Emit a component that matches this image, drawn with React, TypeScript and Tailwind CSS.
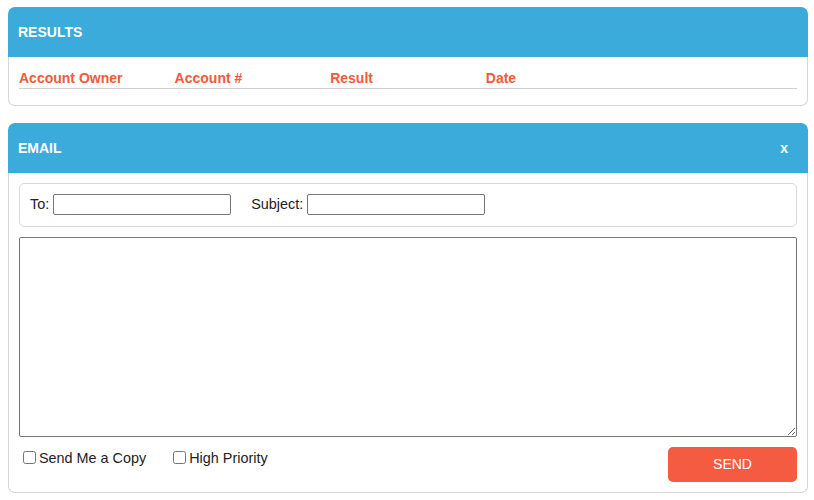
const font = "font-['Liberation_Sans',Arial,sans-serif]";

const columns = ["Account Owner", "Account #", "Result", "Date", ""];

function PanelHeader({ title, onClose }: { title: string; onClose?: boolean }) {
  return (
    <div className="flex h-[50px] items-center justify-between rounded-t-[7px] bg-[#3aabdb] pl-[10px] pr-[20px]">
      <h2 className="text-[14px] font-bold text-white">{title}</h2>
      {onClose && <button className="text-[14px] font-bold leading-none text-white">x</button>}
    </div>
  );
}

function Results() {
  return (
    <section>
      <PanelHeader title="RESULTS" />
      <div className="rounded-b-[7px] border-x border-b border-[#d6d6d6] px-[10px] pb-[16px] pt-[13px]">
        <div className="grid grid-cols-5 border-b border-[#cfcfcf] pb-[2px]">
          {columns.map((c, i) => (
            <div key={i} className="text-[14px] font-bold leading-[16px] text-[#f15a3a]">
              {c}
            </div>
          ))}
        </div>
      </div>
    </section>
  );
}

function Email() {
  return (
    <section className="mt-[17px]">
      <PanelHeader title="EMAIL" onClose />
      <div className="rounded-b-[7px] border-x border-b border-[#d6d6d6] px-[10px] pb-[10px] pt-[10px]">
        <div className="flex items-center rounded-[5px] border border-[#d9d9d9] px-[10px] py-[10px] text-[14.4px] text-[#222]">
          <label className="flex items-center gap-[4px]">
            To:
            <input className="h-[21px] w-[178px] rounded-[2px] border border-[#767676] px-1 outline-none" />
          </label>
          <label className="ml-[20px] flex items-center gap-[4px]">
            Subject:
            <input className="h-[21px] w-[178px] rounded-[2px] border border-[#767676] px-1 outline-none" />
          </label>
        </div>
        <textarea className="mt-[10px] block h-[200px] w-full rounded-[2px] border border-[#767676] outline-none" />
        <div className="mt-[10px] flex items-start justify-between">
          <div className="flex gap-[23px] pt-[3px] text-[14.4px] leading-[16px] text-[#222]">
            <label className="flex items-center">
              <input type="checkbox" className="ml-[4px] mr-[3px] h-[13px] w-[13px]" />
              Send Me a Copy
            </label>
            <label className="flex items-center">
              <input type="checkbox" className="ml-[4px] mr-[3px] h-[13px] w-[13px]" />
              High Priority
            </label>
          </div>
          <button className="h-[35px] w-[129px] rounded-[5px] bg-[#f45b40] text-[14px] text-white">
            SEND
          </button>
        </div>
      </div>
    </section>
  );
}

export default function App() {
  return (
    <div className={`${font} h-[500px] w-[814px] bg-white pl-[8px] pr-[6px] pt-[7px]`}>
      <Results />
      <Email />
    </div>
  );
}
